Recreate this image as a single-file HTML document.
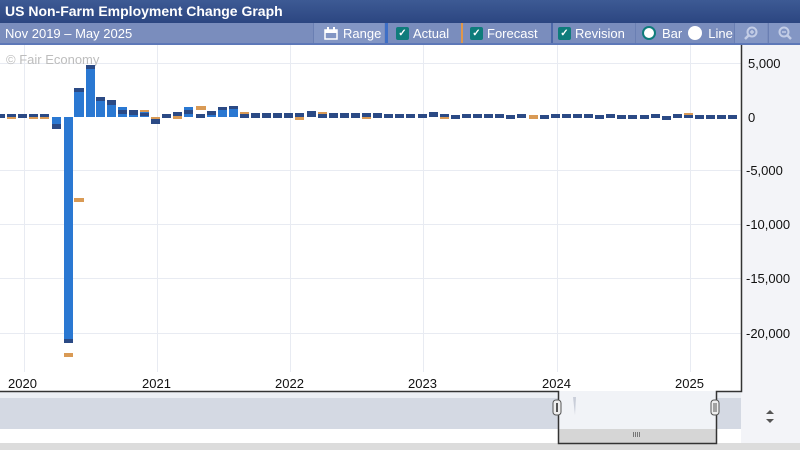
<!DOCTYPE html>
<html><head><meta charset="utf-8"><style>
*{margin:0;padding:0;box-sizing:border-box}
body{width:800px;height:450px;overflow:hidden;background:#fff;font-family:"Liberation Sans",Verdana,sans-serif;position:relative}
.title{position:absolute;left:0;top:0;width:800px;height:23px;background:linear-gradient(#3d5a94,#2c4681);color:#fff;font-weight:bold;font-size:14px;line-height:22px;padding-left:5px}
.tb{position:absolute;left:0;top:23px;width:800px;height:22px;background:#7a8dbd;border-bottom:2px solid #5d78b8;color:#fff;font-size:13px}
.tb>div{position:absolute;top:0;height:20px;display:flex;align-items:center;white-space:nowrap}
.ck{display:inline-block;width:13px;height:13px;background:#0e7c7b;border-radius:2px;margin-right:4px;color:#fff;font-size:10px;line-height:13px;text-align:center;font-weight:bold}
.sep{border-left:1px solid #6a7fb3}
</style></head><body>
<div class="title">US Non-Farm Employment Change Graph</div>
<div class="tb">
<div style="left:5px">Nov 2019 – May 2025</div>
<div class="sep" style="left:313px;width:71px;background:#8396c4;padding-left:10px"><svg width="14" height="13" style="margin-right:5px"><rect x="1" y="3" width="12" height="9" fill="none" stroke="#fff" stroke-width="1.5"/><rect x="1" y="3" width="12" height="3" fill="#fff"/><rect x="3" y="0" width="2" height="4" fill="#fff"/><rect x="9" y="0" width="2" height="4" fill="#fff"/></svg>Range</div>
<div style="left:385px;width:3px;background:#3e6fc6"></div>
<div style="left:396px"><span class="ck">✓</span>Actual</div>
<div style="left:461px;width:2px;background:#e0974a"></div>
<div style="left:470px"><span class="ck">✓</span>Forecast</div>
<div style="left:551px;width:2px;background:#4d68a8"></div>
<div style="left:558px"><span class="ck">✓</span>Revision</div>
<div class="sep" style="left:635px;padding-left:6px"><span style="display:inline-block;width:14px;height:14px;border:2.5px solid #0e7c7b;border-radius:50%;background:#fff;margin-right:6px"></span>Bar<span style="display:inline-block;width:14px;height:14px;border-radius:50%;background:#fff;margin:0 6px"></span>Line</div>
<div class="sep" style="left:734px;width:33px;background:#8396c4;justify-content:center"><svg width="14" height="14"><circle cx="8" cy="6" r="4.5" fill="none" stroke="#c3cde6" stroke-width="2"/><line x1="5" y1="9" x2="1" y2="13" stroke="#c3cde6" stroke-width="2.5"/><line x1="6" y1="6" x2="10" y2="6" stroke="#c3cde6" stroke-width="1.5"/><line x1="8" y1="4" x2="8" y2="8" stroke="#c3cde6" stroke-width="1.5"/></svg></div>
<div class="sep" style="left:768px;width:32px;background:#8396c4;justify-content:center"><svg width="14" height="14"><circle cx="6" cy="6" r="4.5" fill="none" stroke="#c3cde6" stroke-width="2"/><line x1="9" y1="9" x2="13" y2="13" stroke="#c3cde6" stroke-width="2.5"/><line x1="4" y1="6" x2="8" y2="6" stroke="#c3cde6" stroke-width="1.5"/></svg></div>
</div>
<div style="position:absolute;left:741px;top:45px;width:59px;height:405px;background:#f3f4f8"></div>
<svg style="position:absolute;left:0;top:0" width="800" height="450">
<g stroke="#e8ebf2" stroke-width="1">
<line x1="24.5" y1="45" x2="24.5" y2="372"/><line x1="157.5" y1="45" x2="157.5" y2="372"/><line x1="290.5" y1="45" x2="290.5" y2="372"/><line x1="423.5" y1="45" x2="423.5" y2="372"/><line x1="557.5" y1="45" x2="557.5" y2="372"/><line x1="690.5" y1="45" x2="690.5" y2="372"/>
<line x1="0" y1="63.5" x2="741" y2="63.5"/><line x1="0" y1="170.5" x2="741" y2="170.5"/><line x1="0" y1="224.5" x2="741" y2="224.5"/><line x1="0" y1="278.5" x2="741" y2="278.5"/><line x1="0" y1="333.5" x2="741" y2="333.5"/>
</g>
<text x="6" y="64" font-size="13" fill="#bdbdbd" font-family="Liberation Sans,sans-serif">© Fair Economy</text>
<g fill="#2b4a85">
<rect x="-2" y="114" width="7" height="4"/>
<rect x="7" y="114" width="9" height="4"/><rect x="18" y="114" width="9" height="4"/><rect x="29" y="114" width="9" height="4"/><rect x="40" y="114" width="9" height="4"/>
<rect x="162" y="114" width="9" height="4"/>
<rect x="240" y="113" width="9" height="5"/><rect x="251" y="113" width="9" height="5"/><rect x="262" y="113" width="9" height="5"/><rect x="273" y="113" width="9" height="5"/><rect x="284" y="113" width="9" height="5"/><rect x="295" y="113" width="9" height="5"/><rect x="307" y="111" width="9" height="6"/><rect x="318" y="113" width="9" height="5"/><rect x="329" y="113" width="9" height="5"/><rect x="340" y="113" width="9" height="5"/><rect x="351" y="113" width="9" height="5"/><rect x="362" y="113" width="9" height="5"/><rect x="373" y="113" width="9" height="5"/><rect x="384" y="114" width="9" height="4"/><rect x="395" y="114" width="9" height="4"/><rect x="406" y="114" width="9" height="4"/><rect x="418" y="114" width="9" height="4"/><rect x="429" y="112" width="9" height="5"/><rect x="440" y="114" width="9" height="4"/><rect x="451" y="115" width="9" height="4"/><rect x="462" y="114" width="9" height="4"/><rect x="473" y="114" width="9" height="4"/><rect x="484" y="114" width="9" height="4"/><rect x="495" y="114" width="9" height="4"/><rect x="506" y="115" width="9" height="4"/><rect x="517" y="114" width="9" height="4"/><rect x="540" y="115" width="9" height="4"/><rect x="551" y="114" width="9" height="4"/><rect x="562" y="114" width="9" height="4"/><rect x="573" y="114" width="9" height="4"/><rect x="584" y="114" width="9" height="4"/><rect x="595" y="115" width="9" height="4"/><rect x="606" y="114" width="9" height="4"/><rect x="617" y="115" width="9" height="4"/><rect x="628" y="115" width="9" height="4"/><rect x="640" y="115" width="9" height="4"/><rect x="651" y="114" width="9" height="4"/><rect x="662" y="116" width="9" height="4"/><rect x="673" y="114" width="9" height="4"/><rect x="684" y="114" width="9" height="4"/><rect x="695" y="115" width="9" height="4"/><rect x="706" y="115" width="9" height="4"/><rect x="717" y="115" width="9" height="4"/><rect x="728" y="115" width="9" height="4"/>
</g>
<g fill="#d99a55">
<rect x="7" y="117" width="9" height="2"/><rect x="29" y="117" width="9" height="2"/><rect x="40" y="117" width="9" height="2"/>
<rect x="52" y="117" width="9" height="4"/><rect x="74" y="198" width="10" height="4"/><rect x="64" y="353" width="9" height="4"/>
<rect x="86" y="84" width="9" height="4"/><rect x="96" y="103" width="9" height="3"/><rect x="118" y="107" width="9" height="3"/><rect x="140" y="110" width="9" height="3"/><rect x="151" y="117" width="9" height="3"/><rect x="173" y="116" width="9" height="3"/>
<rect x="196" y="106" width="10" height="4"/><rect x="218" y="111" width="9" height="3"/><rect x="229" y="112" width="9" height="3"/>
<rect x="240" y="112" width="9" height="2"/><rect x="295" y="117" width="9" height="3"/><rect x="362" y="117" width="9" height="2"/><rect x="529" y="115" width="9" height="4"/><rect x="684" y="113" width="9" height="2"/><rect x="440" y="117" width="9" height="2"/><rect x="318" y="112" width="9" height="2"/>
</g>
<g fill="#2a78d2">
<rect x="52" y="117" width="9" height="7"/><rect x="64" y="117" width="9" height="222"/>
<rect x="74" y="88" width="10" height="29"/><rect x="86" y="65" width="9" height="52"/><rect x="96" y="97" width="9" height="20"/><rect x="107" y="100" width="9" height="17"/><rect x="118" y="107" width="9" height="10"/><rect x="129" y="110" width="9" height="7"/><rect x="140" y="112" width="9" height="5"/>
<rect x="184" y="107" width="9" height="10"/><rect x="207" y="111" width="9" height="6"/><rect x="218" y="107" width="9" height="10"/><rect x="229" y="106" width="9" height="11"/>
</g>
<g fill="#2b4a85">
<rect x="52" y="124" width="9" height="5"/><rect x="64" y="339" width="9" height="4"/><rect x="74" y="88" width="10" height="4"/><rect x="86" y="65" width="9" height="4"/><rect x="96" y="97" width="9" height="4"/><rect x="107" y="100" width="9" height="5"/><rect x="118" y="110" width="9" height="4"/><rect x="129" y="110" width="9" height="5"/><rect x="140" y="113" width="9" height="3"/>
<rect x="151" y="119" width="9" height="5"/><rect x="173" y="112" width="9" height="4"/><rect x="184" y="110" width="9" height="4"/><rect x="196" y="114" width="9" height="4"/><rect x="207" y="111" width="9" height="4"/><rect x="218" y="107" width="9" height="3"/><rect x="229" y="106" width="9" height="3"/>
</g>
<g font-size="13" fill="#111" font-family="Liberation Sans,sans-serif">
<text x="748" y="68">5,000</text><text x="748" y="122">0</text><text x="746" y="175">-5,000</text><text x="746" y="229">-10,000</text><text x="746" y="283">-15,000</text><text x="746" y="338">-20,000</text>
<text x="8" y="388">2020</text><text x="142" y="388">2021</text><text x="275" y="388">2022</text><text x="408" y="388">2023</text><text x="542" y="388">2024</text><text x="675" y="388">2025</text>
</g>
<rect x="0" y="391" width="741" height="38" fill="#d4d9e3"/>
<rect x="0" y="391" width="741" height="7" fill="#eceff4"/>
<rect x="558" y="391" width="158" height="38" fill="#f1f3f7"/>
<rect x="558" y="429" width="158" height="14" fill="#d6d6d6"/>
<rect x="0" y="443" width="800" height="7" fill="#dcdcdc"/>
<path d="M573 397 L576 397 L575 415 Z" fill="#c9ced9"/>
<polyline points="0,391.5 558.5,391.5 558.5,443.5 716.5,443.5 716.5,391.5 741.5,391.5 741.5,45" fill="none" stroke="#333" stroke-width="1.5"/>
<rect x="553" y="400" width="8" height="15" rx="3" fill="#eee" stroke="#555"/><rect x="556" y="403" width="2" height="9" fill="#555"/>
<rect x="711" y="400" width="8" height="15" rx="3" fill="#eee" stroke="#555"/><rect x="713.5" y="403" width="1" height="9" fill="#555"/><rect x="715.5" y="403" width="1" height="9" fill="#555"/>
<g fill="#777"><rect x="633" y="432" width="1" height="5"/><rect x="635" y="432" width="1" height="5"/><rect x="637" y="432" width="1" height="5"/><rect x="639" y="432" width="1" height="5"/></g>
<path d="M766 414 L770 410 L774 414 Z M766 419 L770 423 L774 419 Z" fill="#555"/>
</svg>
</body></html>
